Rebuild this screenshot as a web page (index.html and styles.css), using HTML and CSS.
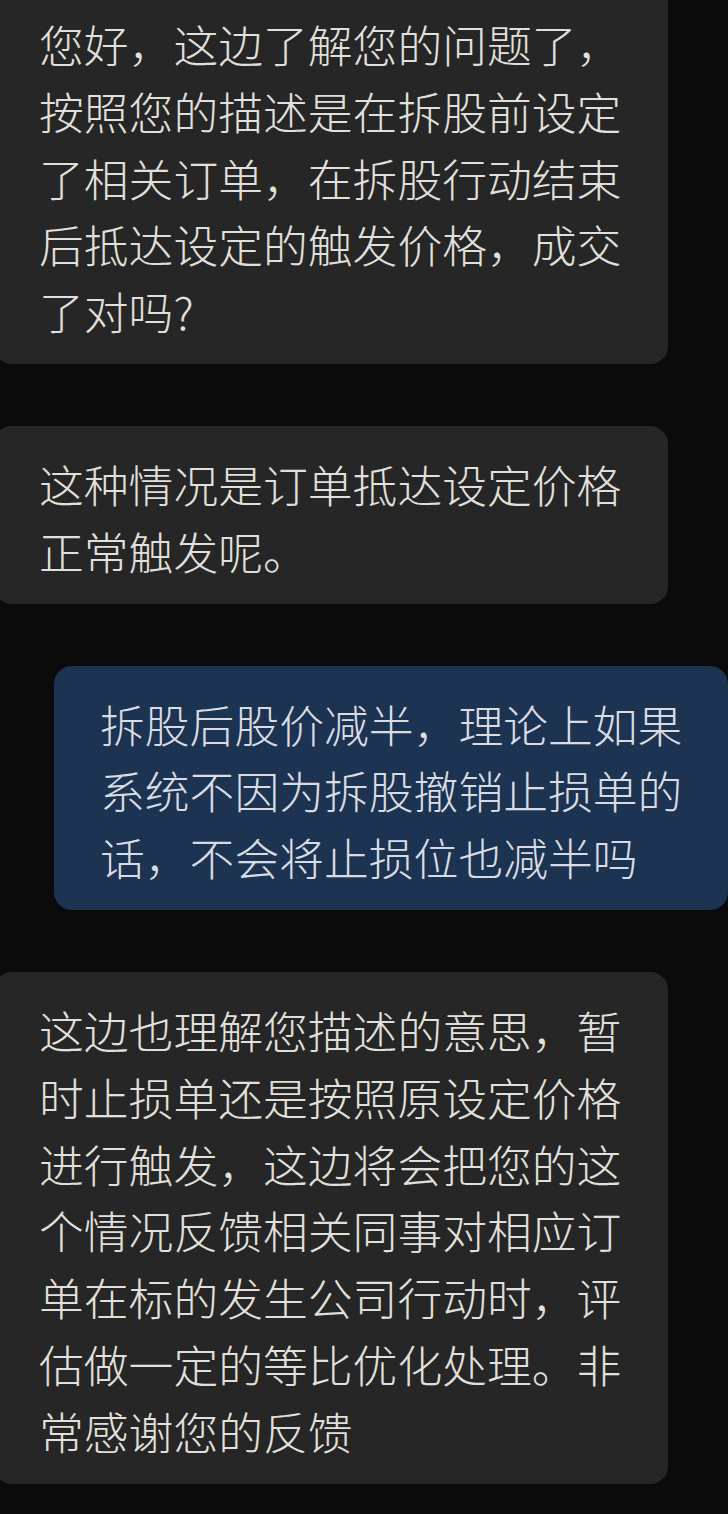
FILE: index.html
```html
<!DOCTYPE html>
<html lang="zh-CN">
<head>
<meta charset="utf-8">
<link rel="stylesheet" href="styles.css">
</head>
<body>
<div class="chat">
  <div class="bubble in first">您好，这边了解您的问题了，<br>按照您的描述是在拆股前设定<br>了相关订单，在拆股行动结束<br>后抵达设定的触发价格，成交<br>了对吗?</div>
  <div class="bubble in">这种情况是订单抵达设定价格<br>正常触发呢。</div>
  <div class="bubble out">拆股后股价减半，理论上如果<br>系统不因为拆股撤销止损单的<br>话，不会将止损位也减半吗</div>
  <div class="bubble in">这边也理解您描述的意思，暂<br>时止损单还是按照原设定价格<br>进行触发，这边将会把您的这<br>个情况反馈相关同事对相应订<br>单在标的发生公司行动时，评<br>估做一定的等比优化处理。非<br>常感谢您的反馈</div>
</div>
</body>
</html>
```

FILE: styles.css
```css
html, body {
  margin: 0;
  padding: 0;
  background: #0b0b0b;
}
body {
  width: 728px;
  height: 1514px;
  overflow: hidden;
}
.chat {
  display: flex;
  flex-direction: column;
  gap: 62px;
  margin-top: -14px;
}
.bubble {
  box-sizing: border-box;
  width: 674px;
  padding: 25px 44px 19px 45px;
  border-radius: 18px;
  font-family: "Noto Sans CJK SC", "Noto Sans", sans-serif;
  font-size: 44.8px;
  font-weight: 300;
  line-height: 66.8px;
  white-space: nowrap;
}
.in {
  align-self: flex-start;
  margin-left: -6px;
  background: #262626;
  color: #e2e0dd;
}
.out {
  align-self: flex-end;
  margin-right: 0;
  padding-left: 46px;
  background: #1d3352;
  color: #d9dde3;
}
```
